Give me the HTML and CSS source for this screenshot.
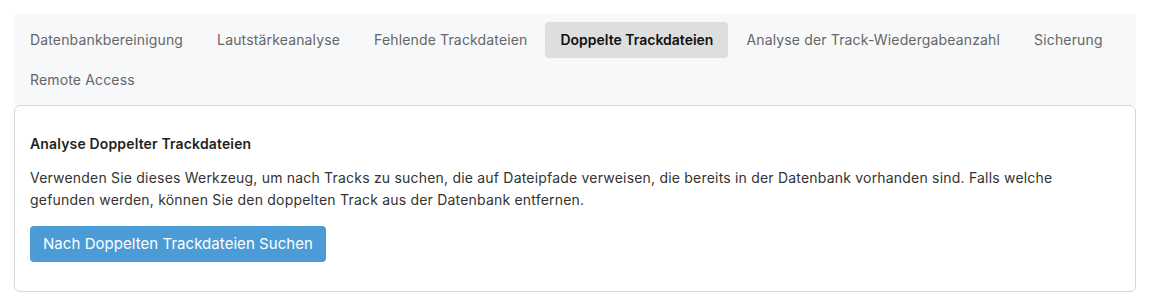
FILE: index.html
```html
<!DOCTYPE html>
<html lang="de">
<head>
    <meta charset="UTF-8">
    <meta name="viewport" content="width=device-width, initial-scale=1.0">
    <title>Wartung</title>
    <link rel="stylesheet" href="styles.css">
</head>
<body>
    <div class="page">
        <nav class="tabs">
            <a href="#" class="tab">Datenbankbereinigung</a>
            <a href="#" class="tab">Lautstärkeanalyse</a>
            <a href="#" class="tab">Fehlende Trackdateien</a>
            <a href="#" class="tab active">Doppelte Trackdateien</a>
            <a href="#" class="tab">Analyse der Track-Wiedergabeanzahl</a>
            <a href="#" class="tab">Sicherung</a>
            <a href="#" class="tab">Remote Access</a>
        </nav>

        <section class="panel">
            <h2 class="panel-title">Analyse Doppelter Trackdateien</h2>
            <p class="panel-text">
                Verwenden Sie dieses Werkzeug, um nach Tracks zu suchen, die auf Dateipfade verweisen, die bereits in der Datenbank vorhanden sind. Falls welche gefunden werden, können Sie den doppelten Track aus der Datenbank entfernen.
            </p>
            <button class="btn-primary">Nach Doppelten Trackdateien Suchen</button>
        </section>
    </div>
</body>
</html>
```

FILE: styles.css
```css
* {
    margin: 0;
    padding: 0;
    box-sizing: border-box;
}

body {
    font-family: 'Inter', 'Liberation Sans', sans-serif;
    letter-spacing: 0.15px;
    background: #ffffff;
    color: #333333;
}

.page {
    padding: 14px;
}

.tabs {
    display: flex;
    flex-wrap: wrap;
    column-gap: 2px;
    row-gap: 4px;
    background: #f7f8fa;
    padding: 8px 0 7px;
}

.tab {
    display: block;
    padding: 8px 16px;
    font-size: 14px;
    line-height: 20px;
    color: #666666;
    text-decoration: none;
    border-radius: 4px;
}

.tab.active {
    background: #dedede;
    color: #111111;
    font-weight: 600;
    letter-spacing: 0;
    padding: 8px 15px;
}

.panel {
    border: 1px solid #d6d6d6;
    border-radius: 6px;
    padding: 28px 16px 29px 15px;
}

.panel-title {
    font-size: 14px;
    line-height: 20px;
    font-weight: 600;
    color: #1f1f1f;
    margin-bottom: 13px;
}

.panel-text {
    font-size: 14px;
    line-height: 22px;
    letter-spacing: 0.2px;
    color: #333333;
    margin-bottom: 15px;
}

.btn-primary {
    font-family: inherit;
    font-size: 15px;
    line-height: 20px;
    letter-spacing: 0.05px;
    padding: 8px 13px;
    color: #ffffff;
    background: #4a9bd6;
    border: none;
    border-radius: 4px;
    cursor: pointer;
}
```
